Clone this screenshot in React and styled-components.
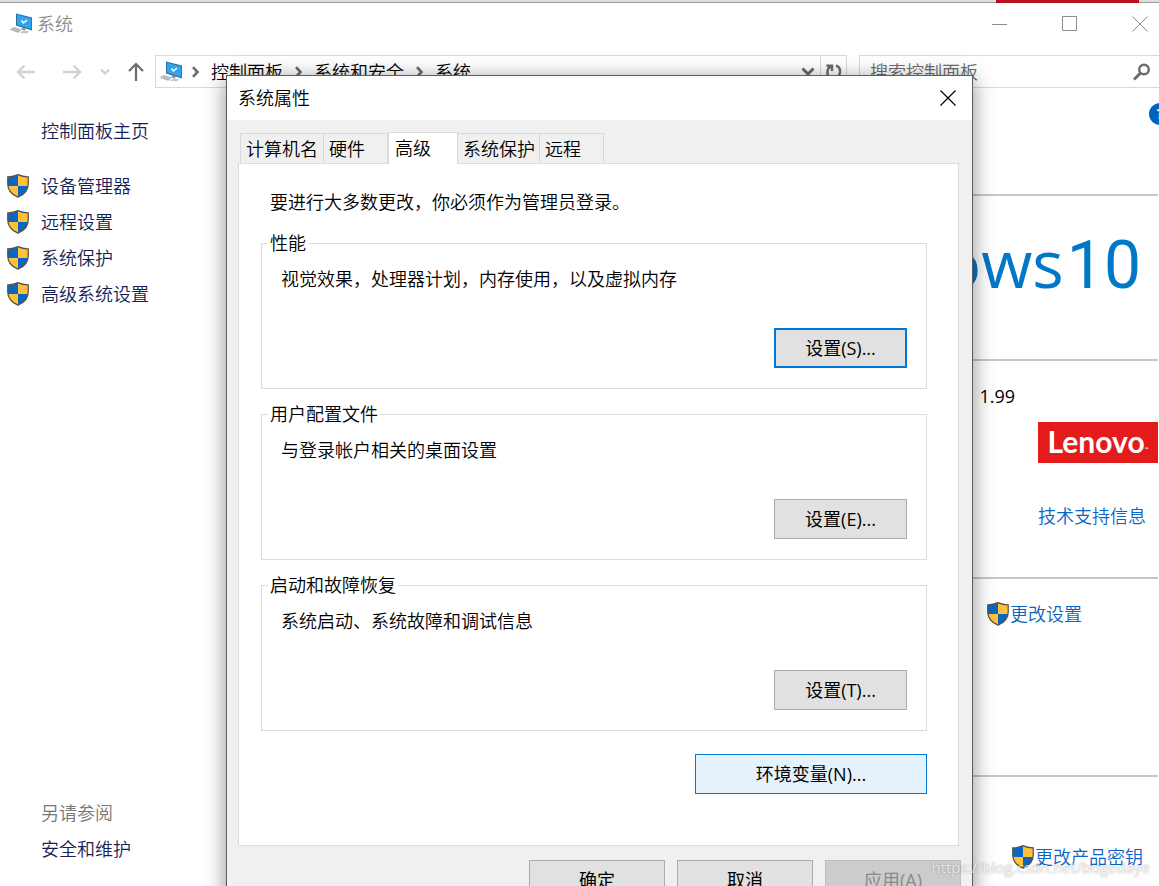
import React from "react";
import styled, { createGlobalStyle } from "styled-components";

const GlobalStyle = createGlobalStyle`
  * { box-sizing: border-box; }
  body {
    margin: 0;
    background: #fff;
    color: #000;
    font-family: "Open Sans", "Noto Sans CJK SC", sans-serif;
    font-size: 18px;
    font-weight: 350;
    line-height: 24px;
  }
  button, input { font: inherit; color: inherit; }
  h1, h2, p, ul { margin: 0; padding: 0; font: inherit; }
  ul { list-style: none; }
`;

const Desktop = styled.div`
  position: relative;
  height: 100vh;
  display: flex;
  flex-direction: column;
  overflow: hidden;
`;

const TopStrip = styled.div`
  display: flex;
  justify-content: flex-end;
  height: 3px;
  flex: none;
  padding-right: 20px;
  background: #dedede;
  border-bottom: 1px solid #9a9a9a;
`;

const RedTab = styled.span`
  width: 143px;
  height: 3px;
  background: #b80f1c;
`;

const TitleBar = styled.header`
  display: flex;
  align-items: center;
  justify-content: space-between;
  height: 42px;
  flex: none;
  padding-left: 9px;
`;

const WindowTitle = styled.h1`
  display: flex;
  align-items: center;
  gap: 4px;
  color: #8c8c8c;
`;

const Captions = styled.div`
  display: flex;
`;

const PlainButton = styled.button`
  display: flex;
  align-items: center;
  justify-content: center;
  padding: 0;
  border: 0;
  background: transparent;
`;

const CaptionButton = styled(PlainButton)`
  width: 70px;
  height: 40px;
  &:last-child { width: 54px; padding-left: 16px; }
`;

const NavBar = styled.nav`
  display: flex;
  align-items: center;
  height: 53px;
  flex: none;
  padding-left: 14px;
`;

const NavButton = styled(PlainButton)`
  width: ${(p) => p.$width || 24}px;
  height: 32px;
  margin-right: ${(p) => p.$after || 0}px;
`;

const AddressBar = styled.div`
  display: flex;
  align-items: center;
  flex: 1;
  height: 33px;
  padding-left: 3px;
  border: 1px solid #d9d9d9;
`;

const Crumbs = styled.div`
  display: flex;
  align-items: center;
  flex: 1;
  gap: 12px;
  padding-left: 9px;
`;

const Crumb = styled(PlainButton)`
  height: 30px;
`;

const RefreshButton = styled(PlainButton)`
  width: 26px;
  height: 31px;
  border-left: 1px solid #d9d9d9;
`;

const SearchBox = styled.label`
  display: flex;
  align-items: center;
  width: 300px;
  height: 33px;
  margin-left: 12px;
  padding: 0 8px 0 10px;
  border: 1px solid #d9d9d9;
  border-right: 0;
`;

const SearchInput = styled.input`
  flex: 1;
  min-width: 0;
  height: 30px;
  padding: 0;
  border: 0;
  outline: 0;
  background: transparent;
  &::placeholder { color: #6d6d6d; opacity: 1; }
`;

const Content = styled.div`
  display: flex;
  flex: 1;
  min-height: 0;
`;

const Sidebar = styled.aside`
  display: flex;
  flex-direction: column;
  width: 227px;
  flex: none;
  padding: 21px 0 25px 7px;
`;

const SideLink = styled.a`
  display: flex;
  align-items: center;
  height: 24px;
  gap: 12px;
  padding-left: ${(p) => (p.$plain ? 34 : 0)}px;
  color: #151f56;
  text-decoration: none;
`;

const TaskList = styled.ul`
  display: flex;
  flex-direction: column;
  gap: 12px;
  margin: 31px 0 auto;
`;

const SeeAlso = styled.h2`
  padding: 0 0 12px 34px;
  color: #767676;
`;

const Details = styled.main`
  display: flex;
  flex-direction: column;
  flex: 1;
  min-width: 0;
`;

const Section = styled.section`
  display: flex;
  flex-direction: column;
  align-items: flex-end;
  flex: none;
  height: ${(p) => p.$height}px;
  padding: ${(p) => p.$top}px ${(p) => p.$right}px 0 0;
  margin-right: 1px;
  border-bottom: ${(p) => (p.$last ? 0 : 2)}px solid #c6c6c6;
`;

const HelpButton = styled(PlainButton)`
  width: 22px;
  height: 22px;
  margin-right: -13px;
  border-radius: 50%;
  background: #0063bf;
  color: #fff;
  font-size: 14px;
  font-weight: 700;
`;

const WindowsMark = styled.div`
  display: flex;
  align-items: baseline;
  gap: 3px;
  color: #0078c8;
  font-size: 66px;
  font-weight: 400;
  line-height: 80px;
`;

const WindowsVersion = styled.span`
  font-family: Roboto, sans-serif;
`;

const ClockSpeed = styled.p`
  margin: 0 143px 14px 0;
  font-weight: 400;
`;

const LenovoMark = styled.div`
  display: flex;
  align-items: center;
  justify-content: center;
  width: 120px;
  height: 41px;
  margin-bottom: 41px;
  padding-bottom: 3px;
  background: #e31b1b;
  color: #fff;
  font-family: Lato, sans-serif;
  font-size: 30px;
  font-weight: 700;
  line-height: 40px;
`;

const Trademark = styled.small`
  padding-top: 16px;
  font-size: 5px;
  line-height: 8px;
`;

const DetailLink = styled.a`
  display: flex;
  align-items: center;
  gap: 1px;
  margin-right: ${(p) => p.$end || 0}px;
  color: #0a66c4;
  text-decoration: none;
`;

const Dialog = styled.div`
  position: absolute;
  top: 75px;
  left: 226px;
  right: 186px;
  border: 1px solid #5c5c5c;
  background: #f0f0f0;
  box-shadow: 0 4px 20px rgba(0, 0, 0, 0.45);
`;

const DialogTitle = styled.div`
  display: flex;
  align-items: center;
  justify-content: space-between;
  height: 44px;
  padding: 0 11px;
  background: #fff;
`;

const CloseButton = styled(PlainButton)`
  width: 26px;
  height: 26px;
`;

const DialogBody = styled.div`
  padding: 12px 13px 14px 11px;
`;

const Tabs = styled.div`
  display: flex;
  align-items: flex-end;
  padding-left: 2px;
`;

const Tab = styled.button`
  width: ${(p) => p.$width}px;
  height: ${(p) => (p.$active ? 32 : 30)}px;
  margin-bottom: ${(p) => (p.$active ? -1 : 0)}px;
  padding: 0 0 ${(p) => (p.$active ? 2 : 0)}px ${(p) => (p.$active ? 6 : 5)}px;
  position: relative;
  border: 1px solid #d9d9d9;
  border-left-width: ${(p) => (p.$first || p.$active ? 1 : 0)}px;
  border-bottom: 0;
  background: ${(p) => (p.$active ? "#fff" : "#f0f0f0")};
  text-align: left;
  white-space: nowrap;
`;

const Panel = styled.div`
  padding: 26px 31px 51px 22px;
  border: 1px solid #dcdcdc;
  background: #fff;
`;

const Notice = styled.p`
  padding: 0 0 17px 9px;
`;

const Group = styled.fieldset`
  display: block;
  min-width: 0;
  margin: 0 0 13px;
  padding: 0 19px 20px;
  border: 1px solid #dcdcdc;
`;

const GroupTitle = styled.legend`
  margin-left: -13px;
  padding: 0 2px;
`;

const GroupText = styled.p`
  padding: 12px 0 37px;
`;

const ButtonRow = styled.div`
  display: flex;
  justify-content: flex-end;
  padding-top: ${(p) => p.$top || 0}px;
`;

const DialogFooter = styled(ButtonRow)`
  gap: 12px;
  margin-right: -2px;
`;

const PushButton = styled.button`
  width: ${(p) => p.$width || 133}px;
  height: 40px;
  padding: 0;
  border: ${(p) => (p.$focus ? "2px solid #0078d7" : p.$hot ? "1px solid #0078d7" : "1px solid #adadad")};
  background: ${(p) => (p.$hot ? "#e5f1fb" : "#e1e1e1")};
  font-weight: 400;
  &:disabled { border-color: #bfbfbf; background: #cccccc; color: #8a8a8a; }
`;

const Watermark = styled.div`
  position: absolute;
  right: 9px;
  bottom: 7px;
  color: rgba(255, 255, 255, 0.75);
  font-family: "Open Sans", sans-serif;
  font-size: 15px;
  font-weight: 400;
  text-shadow: 0 0 2px rgba(0, 0, 0, 0.35);
  pointer-events: none;
`;

const Computer = () => (
  <svg width="24" height="22" viewBox="0 0 24 22" aria-hidden="true">
    <path d="M7 .5 23 4.500v13L7 12.500z" fill="#2f6f9f" />
    <path d="M8 1.800 22.200 5.400v10.700L8 11.600z" fill="#2fa5f0" />
    <path d="m12.500 7.500 2 2.500 3.500-3" fill="none" stroke="#fff" strokeWidth="1.500" />
    <path d="m13 14.500 4 1-1 2-4-1z" fill="#8a949b" />
    <path d="m0 16.500 5-3 8 3-4 3.500z" fill="#cfd4d8" />
    <path d="m2 16.500 8 2.500M4 15.200l8 2.600" stroke="#8f989e" strokeWidth=".8" />
    <path d="m11 20 3-2.500 6 1-2 1.700z" fill="#bfc5c9" />
  </svg>
);

const Shield = () => (
  <svg width="22" height="24" viewBox="0 0 23 24" preserveAspectRatio="none" aria-hidden="true">
    <path d="M11.500.7C8 2.300 4.500 3 .8 2.900V10c0 6.500 4.500 10.700 10.700 13.200z" fill="#0b66c3" />
    <path d="M11.500.7C15 2.300 18.500 3 22.200 2.900V10c0 6.500-4.500 10.700-10.700 13.200z" fill="#ffc03a" />
    <path d="M.8 12h10.700v11.200C6 21 1.500 17.500.8 12z" fill="#ffc03a" />
    <path d="M22.200 12H11.500v11.200C17 21 21.500 17.500 22.200 12z" fill="#0b66c3" />
    <path d="M11.500.7C8 2.300 4.500 3 .8 2.900V10c0 6.500 4.500 10.700 10.700 13.200C17.700 20.700 22.200 16.500 22.200 10V2.900C18.500 3 15 2.300 11.500.7z" fill="none" stroke="#5a5344" strokeWidth="1.300" />
  </svg>
);

const Stroke = ({ w, h, d, color, width = 1 }) => (
  <svg width={w} height={h} viewBox={`0 0 ${w} ${h}`} fill="none" stroke={color} strokeWidth={width} aria-hidden="true">
    <path d={d} />
  </svg>
);

const Chevron = () => <Stroke w={7} h={12} d="M1 1.200 5.500 6 1 10.800" color="#6b6b6b" width={2.6} />;

const tasks = ["设备管理器", "远程设置", "系统保护", "高级系统设置"];

const tabs = [
  { name: "计算机名", width: 84 },
  { name: "硬件", width: 64 },
  { name: "高级", width: 70, active: true },
  { name: "系统保护", width: 82 },
  { name: "远程", width: 64 },
];

const groups = [
  { title: "性能", text: "视觉效果，处理器计划，内存使用，以及虚拟内存", button: "设置(S)...", focus: true },
  { title: "用户配置文件", text: "与登录帐户相关的桌面设置", button: "设置(E)..." },
  { title: "启动和故障恢复", text: "系统启动、系统故障和调试信息", button: "设置(T)..." },
];

function SystemProperties() {
  return (
    <Dialog role="dialog" aria-labelledby="props-title">
      <DialogTitle>
        <h2 id="props-title">系统属性</h2>
        <CloseButton aria-label="关闭">
          <Stroke w={16} h={16} d="M.5.5l15 15M15.500.5l-15 15" color="#000" width={1.2} />
        </CloseButton>
      </DialogTitle>
      <DialogBody>
        <Tabs role="tablist">
          {tabs.map((t, i) => (
            <Tab key={t.name} role="tab" aria-selected={!!t.active} $active={t.active} $first={i === 0} $width={t.width}>
              {t.name}
            </Tab>
          ))}
        </Tabs>
        <Panel role="tabpanel">
          <Notice>要进行大多数更改，你必须作为管理员登录。</Notice>
          {groups.map((g) => (
            <Group key={g.title}>
              <GroupTitle>{g.title}</GroupTitle>
              <GroupText>{g.text}</GroupText>
              <ButtonRow>
                <PushButton $focus={g.focus}>{g.button}</PushButton>
              </ButtonRow>
            </Group>
          ))}
          <ButtonRow $top={10}>
            <PushButton $width={232} $hot>环境变量(N)...</PushButton>
          </ButtonRow>
        </Panel>
        <DialogFooter $top={14}>
          <PushButton $width={136}>确定</PushButton>
          <PushButton $width={136}>取消</PushButton>
          <PushButton $width={136} disabled>应用(A)</PushButton>
        </DialogFooter>
      </DialogBody>
    </Dialog>
  );
}

export default function App() {
  return (
    <Desktop>
      <GlobalStyle />
      <TopStrip><RedTab /></TopStrip>
      <TitleBar>
        <WindowTitle><Computer />系统</WindowTitle>
        <Captions>
          <CaptionButton aria-label="最小化"><Stroke w={16} h={16} d="M0 8.500h15" color="#8c8c8c" /></CaptionButton>
          <CaptionButton aria-label="最大化"><Stroke w={16} h={16} d="M.5.5h14v14H.5z" color="#8c8c8c" /></CaptionButton>
          <CaptionButton aria-label="关闭"><Stroke w={16} h={16} d="M.5.5l15 15M15.500.5l-15 15" color="#8c8c8c" /></CaptionButton>
        </Captions>
      </TitleBar>
      <NavBar>
        <NavButton $after={22} aria-label="后退"><Stroke w={20} h={16} d="M19 8H2M8.500 1.500 2 8l6.500 6.500" color="#d2d2d2" width={2.4} /></NavButton>
        <NavButton $after={14} aria-label="前进"><Stroke w={20} h={16} d="M1 8h17M11.500 1.500 18 8l-6.500 6.500" color="#d2d2d2" width={2.4} /></NavButton>
        <NavButton $width={14} $after={12} aria-label="最近的位置"><Stroke w={10} h={8} d="M1 1.500 5 5.500l4-4" color="#d2d2d2" width={2.4} /></NavButton>
        <NavButton $after={7} aria-label="向上"><Stroke w={18} h={20} d="M9 19V2M2 9l7-7 7 7" color="#6b6b6b" width={2.2} /></NavButton>
        <AddressBar>
          <Computer />
          <Crumbs>
            <Chevron />
            <Crumb>控制面板</Crumb>
            <Chevron />
            <Crumb>系统和安全</Crumb>
            <Chevron />
            <Crumb>系统</Crumb>
          </Crumbs>
          <NavButton aria-label="历史记录"><Stroke w={14} h={9} d="M1.500 1.500 7 7l5.500-5.500" color="#6b6b6b" width={3} /></NavButton>
          <RefreshButton aria-label="刷新">
            <svg width="18" height="18" viewBox="0 0 18 18" fill="none" stroke="#6b6b6b" strokeWidth="2.500" aria-hidden="true">
              <path d="M11 2.500c5.500 2 5.500 10-.5 12.500M6.500 15.500C1 13.500 1.500 6 5.500 3.500" />
              <path d="M1.500 2.800H7V8" />
            </svg>
          </RefreshButton>
        </AddressBar>
        <SearchBox>
          <SearchInput aria-label="搜索" placeholder="搜索控制面板" />
          <svg width="18" height="18" viewBox="0 0 18 18" fill="none" stroke="#6b6b6b" aria-hidden="true">
            <circle cx="11" cy="6.500" r="4.800" strokeWidth="2.400" />
            <path d="m7.500 10-6.500 6.500" strokeWidth="3" />
          </svg>
        </SearchBox>
      </NavBar>
      <Content>
        <Sidebar>
          <SideLink href="#home" $plain>控制面板主页</SideLink>
          <TaskList>
            {tasks.map((t) => (
              <li key={t}><SideLink href="#task"><Shield />{t}</SideLink></li>
            ))}
          </TaskList>
          <SeeAlso>另请参阅</SeeAlso>
          <SideLink href="#security" $plain>安全和维护</SideLink>
        </Sidebar>
        <Details>
          <Section $height={98} $top={5} $right={0}>
            <HelpButton aria-label="帮助">?</HelpButton>
          </Section>
          <Section $height={165} $top={26} $right={17}>
            <WindowsMark>ows<WindowsVersion>10</WindowsVersion></WindowsMark>
          </Section>
          <Section $height={218} $top={23} $right={0}>
            <ClockSpeed>1.99</ClockSpeed>
            <LenovoMark>Lenovo<Trademark>™</Trademark></LenovoMark>
            <DetailLink href="#support" $end={12}>技术支持信息</DetailLink>
          </Section>
          <Section $height={198} $top={23} $right={76}>
            <DetailLink href="#change"><Shield />更改设置</DetailLink>
          </Section>
          <Section $height={110} $top={68} $right={15} $last>
            <DetailLink href="#key"><Shield />更改产品密钥</DetailLink>
          </Section>
        </Details>
      </Content>
      <SystemProperties />
      <Watermark>https://blog.csdn.net/bogedaye</Watermark>
    </Desktop>
  );
}
